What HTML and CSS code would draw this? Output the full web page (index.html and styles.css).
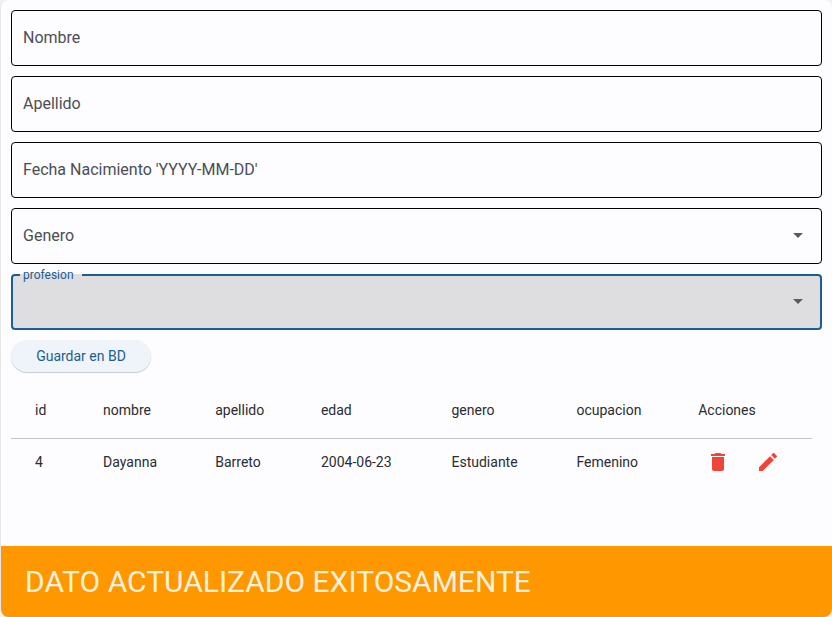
FILE: index.html
```html
<!DOCTYPE html>
<html lang="es">
<head>
  <meta charset="utf-8">
  <meta name="viewport" content="width=device-width, initial-scale=1">
  <title>Registro</title>
  <link rel="stylesheet" href="styles.css">
</head>
<body>
  <div class="window">
    <main class="content">
      <form class="form">
        <div class="field">
          <input class="control" id="nombre" type="text">
          <label class="label" for="nombre">Nombre</label>
        </div>
        <div class="field">
          <input class="control" id="apellido" type="text">
          <label class="label" for="apellido">Apellido</label>
        </div>
        <div class="field">
          <input class="control" id="fecha" type="text">
          <label class="label" for="fecha">Fecha Nacimiento 'YYYY-MM-DD'</label>
        </div>
        <div class="field">
          <select class="control" id="genero">
            <option value=""></option>
            <option>Femenino</option>
            <option>Masculino</option>
          </select>
          <label class="label" for="genero">Genero</label>
          <svg class="arrow" viewBox="0 0 24 24" aria-hidden="true"><path d="M7 9l5 5 5-5z"/></svg>
        </div>
        <div class="field field-active">
          <select class="control" id="profesion">
            <option value=""></option>
            <option>Estudiante</option>
          </select>
          <label class="label" for="profesion">profesion</label>
          <svg class="arrow" viewBox="0 0 24 24" aria-hidden="true"><path d="M7 9l5 5 5-5z"/></svg>
        </div>
        <button class="save" type="button">Guardar en BD</button>
      </form>

      <table class="records">
        <colgroup>
          <col class="col-id">
          <col class="col-nombre">
          <col class="col-apellido">
          <col class="col-edad">
          <col class="col-genero">
          <col class="col-ocupacion">
          <col class="col-acciones">
        </colgroup>
        <thead>
          <tr>
            <th>id</th>
            <th>nombre</th>
            <th>apellido</th>
            <th>edad</th>
            <th>genero</th>
            <th>ocupacion</th>
            <th>Acciones</th>
          </tr>
        </thead>
        <tbody>
          <tr>
            <td>4</td>
            <td>Dayanna</td>
            <td>Barreto</td>
            <td>2004-06-23</td>
            <td>Estudiante</td>
            <td>Femenino</td>
            <td>
              <div class="actions">
                <button class="icon-button" type="button" aria-label="Eliminar">
                  <svg class="icon" viewBox="0 0 24 24" aria-hidden="true"><path d="M6 19c0 1.1.9 2 2 2h8c1.1 0 2-.9 2-2V7H6v12zM19 4h-3.5l-1-1h-5l-1 1H5v2h14V4z"/></svg>
                </button>
                <button class="icon-button" type="button" aria-label="Editar">
                  <svg class="icon" viewBox="0 0 24 24" aria-hidden="true"><path d="M3 17.25V21h3.75L17.81 9.94l-3.75-3.75L3 17.25zM20.71 7.04c.39-.39.39-1.02 0-1.41l-2.34-2.34c-.39-.39-1.02-.39-1.41 0l-1.83 1.83 3.75 3.75 1.83-1.83z"/></svg>
                </button>
              </div>
            </td>
          </tr>
        </tbody>
      </table>
    </main>
    <div class="snackbar" role="status">DATO ACTUALIZADO EXITOSAMENTE</div>
  </div>
</body>
</html>
```
FILE: styles.css
```css
:root {
  --page: #fdfcff;
  --primary: #1b5e91;
  --text: #2b2c30;
  --muted: #4c4e53;
  --fill: #dedde0;
  --danger: #f04438;
}

* {
  box-sizing: border-box;
}

body {
  margin: 0;
  background: #f1f1f2;
  color: var(--text);
  font-family: Roboto, "Liberation Sans", sans-serif;
  font-size: 14px;
  line-height: 20px;
}

.window {
  display: flex;
  flex-direction: column;
  min-height: 100vh;
  border-left: 1px solid #e6e6e8;
  border-radius: 8px;
  background: var(--page);
  overflow: hidden;
}

.content {
  flex: 1;
  padding: 10px;
}

.form {
  display: flex;
  flex-direction: column;
  gap: 10px;
}

/* Control, label and arrow share one grid cell. */
.field {
  display: grid;
  align-items: center;
}

.field > * {
  grid-area: 1 / 1;
}

.control {
  width: 100%;
  height: 56px;
  padding: 0 12px;
  border: 1px solid #000;
  border-radius: 4px;
  outline: 0;
  background: transparent;
  color: var(--text);
  font: inherit;
  font-size: 16px;
  appearance: none;
}

.label {
  justify-self: start;
  padding-left: 12px;
  color: var(--muted);
  font-size: 16px;
  line-height: 24px;
  pointer-events: none;
}

.arrow {
  justify-self: end;
  width: 24px;
  height: 24px;
  margin-right: 12px;
  fill: #5b5c60;
  pointer-events: none;
}

.field-active {
  position: relative;
}

.field-active .control {
  border: 2px solid var(--primary);
  background: var(--fill);
}

/* The floating label opens a notch in the top border. */
.field-active .label {
  position: absolute;
  top: -7px;
  left: 9px;
  padding: 0 8px 0 3px;
  background: linear-gradient(var(--page) 7px, var(--fill) 7px);
  color: var(--primary);
  font-size: 12px;
  line-height: 16px;
}

.save {
  align-self: flex-start;
  min-width: 140px;
  height: 32px;
  padding: 0 24px;
  border: 0;
  border-radius: 16px;
  background: #eff3fa;
  box-shadow: 0 1px 1px rgba(0, 0, 0, 0.2);
  color: var(--primary);
  font: inherit;
}

.records {
  width: calc(100% - 10px);
  margin-top: 10px;
  border-collapse: collapse;
  table-layout: fixed;
}

.col-id { width: 8.5%; }
.col-nombre { width: 14%; }
.col-apellido { width: 13.2%; }
.col-edad { width: 16.3%; }
.col-genero { width: 15.6%; }
.col-ocupacion { width: 15.2%; }
.col-acciones { width: 17.2%; }

.records th,
.records td {
  padding: 0 0 0 24px;
  font-weight: 400;
  text-align: left;
}

.records th {
  height: 56px;
  border-bottom: 1px solid #c3c4c8;
}

.records td {
  height: 48px;
}

.actions {
  display: flex;
  gap: 10px;
}

.icon-button {
  display: grid;
  place-items: center;
  width: 40px;
  height: 40px;
  padding: 0;
  border: 0;
  background: transparent;
}

.icon {
  width: 24px;
  height: 24px;
  fill: var(--danger);
}

.snackbar {
  padding: 18px 24px 17px;
  background: #ff9800;
  color: #fdf0dc;
  font-size: 30px;
  line-height: 36px;
}
```
